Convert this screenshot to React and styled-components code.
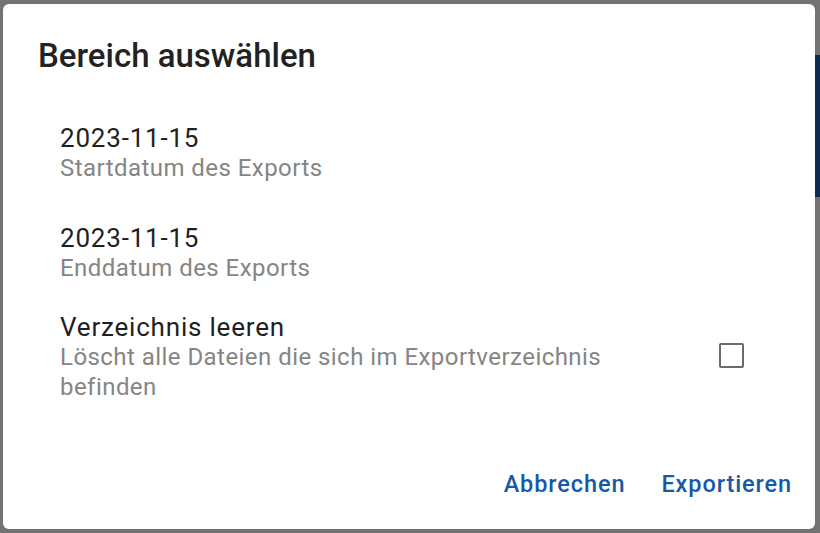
import React from "react";
import styled, { createGlobalStyle } from "styled-components";

const GlobalStyle = createGlobalStyle`
  html, body {
    margin: 0;
    padding: 0;
    background: #737373;
  }
  * {
    box-sizing: border-box;
  }
`;

const Backdrop = styled.div`
  display: flex;
  width: 820px;
  height: 533px;
  padding: 4px 0 4px 3px;
  background: #737373;
  font-family: Roboto, "Noto Sans", "Liberation Sans", sans-serif;
`;

const Dialog = styled.div`
  flex: 1;
  display: flex;
  flex-direction: column;
  background: #ffffff;
  border-radius: 6px;
  padding: 32px 23px 26px 35px;
`;

// the app behind the dialog peeks out on the right edge
const Peek = styled.div`
  width: 5px;
  display: flex;
  flex-direction: column;
  padding-top: 51px;
`;

const PeekBar = styled.div`
  height: 142px;
  background: #0d2b52;
`;

const Title = styled.h2`
  margin: 0;
  font-size: 33px;
  line-height: 40px;
  font-weight: 500;
  color: #222222;
`;

const List = styled.div`
  display: flex;
  flex-direction: column;
  padding-left: 22px;
  padding-right: 48px;
`;

const Item = styled.div`
  display: flex;
  align-items: center;
  gap: 24px;
  margin-top: ${(p) => p.$top}px;
`;

const ItemText = styled.div`
  flex: 1;
  display: flex;
  flex-direction: column;
`;

const Primary = styled.div`
  font-size: 26px;
  line-height: 30px;
  letter-spacing: 0.8px;
  color: #1f1f1f;
`;

const Secondary = styled.div`
  font-size: 24px;
  line-height: 30px;
  letter-spacing: 0.45px;
  color: #858585;
  max-width: 560px;
`;

const CheckBox = styled.span`
  width: 25px;
  height: 25px;
  margin-bottom: 4px;
  border: 2.5px solid #6b6b6b;
  border-radius: 2px;
  flex-shrink: 0;
`;

const Actions = styled.div`
  margin-top: auto;
  display: flex;
  justify-content: flex-end;
  gap: 36px;
`;

const TextButton = styled.button`
  border: none;
  background: none;
  padding: 0;
  font-family: inherit;
  font-size: 23.5px;
  line-height: 38px;
  font-weight: 500;
  letter-spacing: 0.9px;
  color: #1759a6;
  cursor: pointer;
`;

const items = [
  { top: 47, primary: "2023-11-15", secondary: "Startdatum des Exports" },
  { top: 40, primary: "2023-11-15", secondary: "Enddatum des Exports" },
  {
    top: 29,
    primary: "Verzeichnis leeren",
    secondary: "Löscht alle Dateien die sich im Exportverzeichnis befinden",
    checkbox: true,
  },
];

export default function App() {
  return (
    <>
      <GlobalStyle />
      <Backdrop>
        <Dialog>
          <Title>Bereich auswählen</Title>
          <List>
            {items.map((item, i) => (
              <Item key={i} $top={item.top}>
                <ItemText>
                  <Primary>{item.primary}</Primary>
                  <Secondary>{item.secondary}</Secondary>
                </ItemText>
                {item.checkbox && <CheckBox />}
              </Item>
            ))}
          </List>
          <Actions>
            <TextButton>Abbrechen</TextButton>
            <TextButton>Exportieren</TextButton>
          </Actions>
        </Dialog>
        <Peek>
          <PeekBar />
        </Peek>
      </Backdrop>
    </>
  );
}
